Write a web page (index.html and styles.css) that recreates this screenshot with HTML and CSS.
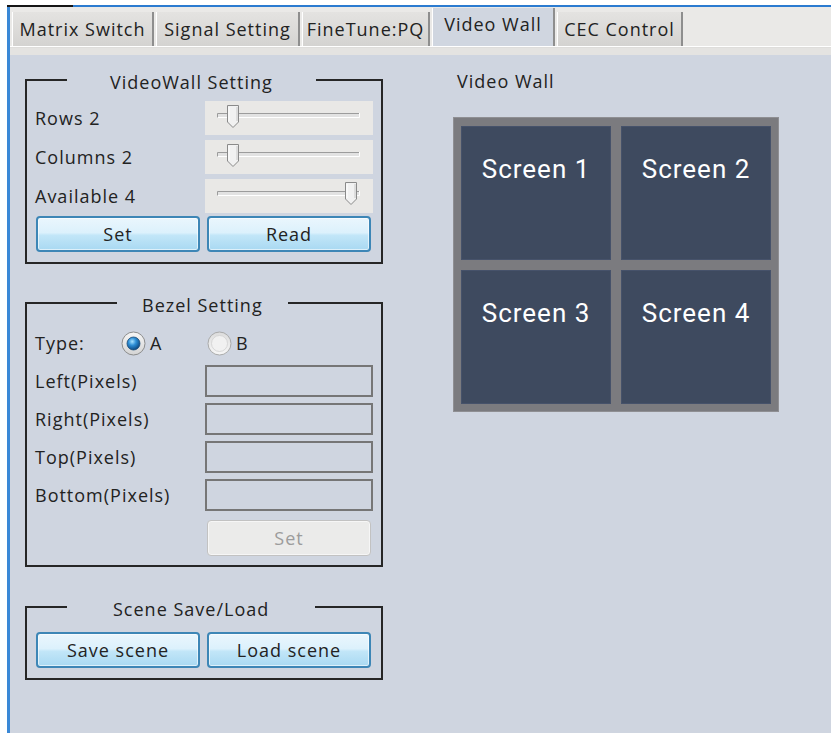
FILE: index.html
```html
<!DOCTYPE html>
<html>
<head>
<meta charset="utf-8">
<title>Video Wall</title>
<link rel="stylesheet" href="styles.css">
</head>
<body>
<div class="topline"><div class="topline-dark"></div><div class="topline-blue"></div></div>
<div class="frame">
  <div class="tabstrip">
    <div class="tab t1">Matrix Switch</div>
    <div class="tab t2">Signal Setting</div>
    <div class="tab t3">FineTune:PQ</div>
    <div class="tab t4 active">Video Wall</div>
    <div class="tab t5">CEC Control</div>
  </div>
  <div class="band"></div>
  <div class="content">
    <div class="leftcol">
      <div class="group g1">
        <div class="ghead"><span class="gl gl-left"></span><span class="gt">VideoWall Setting</span><span class="gl gl-right"></span></div>
        <div class="gbody">
          <div class="srow"><span class="lbl">Rows 2</span>
            <div class="slider"><svg width="168" height="34" viewBox="0 0 168 34"><rect x="12" y="12" width="142" height="5" fill="#e2e2e2"/><path d="M12.5 17V12.5H154" stroke="#9c9c9c" fill="none"/><path d="M12.5 16.5H154.5V12" stroke="#ffffff" fill="none"/><path d="M22.5 4.5h11v16.5l-5.5 5.5l-5.5-5.5z" fill="#f1f1f1" stroke="#8a8a8a"/><path d="M24 6v14" stroke="#ffffff"/><path d="M32 6v14" stroke="#c8c8c8"/></svg></div>
          </div>
          <div class="srow"><span class="lbl">Columns 2</span>
            <div class="slider"><svg width="168" height="34" viewBox="0 0 168 34"><rect x="12" y="12" width="142" height="5" fill="#e2e2e2"/><path d="M12.5 17V12.5H154" stroke="#9c9c9c" fill="none"/><path d="M12.5 16.5H154.5V12" stroke="#ffffff" fill="none"/><path d="M22.5 4.5h11v16.5l-5.5 5.5l-5.5-5.5z" fill="#f1f1f1" stroke="#8a8a8a"/><path d="M24 6v14" stroke="#ffffff"/><path d="M32 6v14" stroke="#c8c8c8"/></svg></div>
          </div>
          <div class="srow"><span class="lbl">Available 4</span>
            <div class="slider"><svg width="168" height="34" viewBox="0 0 168 34"><rect x="12" y="12" width="142" height="5" fill="#e2e2e2"/><path d="M12.5 17V12.5H154" stroke="#9c9c9c" fill="none"/><path d="M12.5 16.5H154.5V12" stroke="#ffffff" fill="none"/><path d="M140.5 3.5h11v16.5l-5.5 5.5l-5.5-5.5z" fill="#f1f1f1" stroke="#8a8a8a"/><path d="M142 5v14" stroke="#ffffff"/><path d="M150 5v14" stroke="#c8c8c8"/></svg></div>
          </div>
          <div class="btnrow"><button class="btn">Set</button><button class="btn">Read</button></div>
        </div>
      </div>

      <div class="group g2">
        <div class="ghead"><span class="gl gl-left"></span><span class="gt">Bezel Setting</span><span class="gl gl-right"></span></div>
        <div class="gbody">
          <div class="trow">
            <span class="tlbl">Type:</span>
            <span class="radio"><svg width="25" height="25" viewBox="0 0 25 25"><defs><linearGradient id="rrA" x1="0" y1="0" x2="0" y2="1"><stop offset="0" stop-color="#f6f6f6"/><stop offset="1" stop-color="#d4d4d4"/></linearGradient><radialGradient id="rbA" cx="40%" cy="35%" r="65%"><stop offset="0" stop-color="#a8e2ff"/><stop offset="0.45" stop-color="#2e8fd6"/><stop offset="1" stop-color="#0c4a84"/></radialGradient></defs><circle cx="12.5" cy="12.5" r="11.5" fill="url(#rrA)" stroke="#8b8c8c"/><circle cx="12.5" cy="12.5" r="6.5" fill="url(#rbA)" stroke="#1c4c78" stroke-width="0.8"/></svg><span>A</span></span>
            <span class="radio"><svg width="25" height="25" viewBox="0 0 25 25"><defs><linearGradient id="rrB" x1="0" y1="0" x2="0" y2="1"><stop offset="0" stop-color="#dcdcdc"/><stop offset="1" stop-color="#f7f7f7"/></linearGradient></defs><circle cx="12.5" cy="12.5" r="11.5" fill="url(#rrB)" stroke="#a9aaaa"/><circle cx="12.5" cy="12.5" r="8" fill="#f1f1f1" stroke="#d0d0d0" stroke-width="0.8"/></svg><span>B</span></span>
          </div>
          <div class="frow"><span class="lbl">Left(Pixels)</span><div class="tbox"></div></div>
          <div class="frow"><span class="lbl">Right(Pixels)</span><div class="tbox"></div></div>
          <div class="frow"><span class="lbl">Top(Pixels)</span><div class="tbox"></div></div>
          <div class="frow"><span class="lbl">Bottom(Pixels)</span><div class="tbox"></div></div>
          <div class="setrow"><button class="btn btn-disabled" disabled>Set</button></div>
        </div>
      </div>

      <div class="group g3">
        <div class="ghead"><span class="gl gl-left"></span><span class="gt">Scene Save/Load</span><span class="gl gl-right"></span></div>
        <div class="gbody">
          <div class="btnrow"><button class="btn">Save scene</button><button class="btn">Load scene</button></div>
        </div>
      </div>
    </div>

    <div class="rightcol">
      <div class="walltitle">Video Wall</div>
      <div class="wall">
        <div class="screen">Screen 1</div>
        <div class="screen">Screen 2</div>
        <div class="screen">Screen 3</div>
        <div class="screen">Screen 4</div>
      </div>
    </div>
  </div>
</div>
</body>
</html>
```

FILE: styles.css
```css
* { box-sizing: border-box; }

html, body {
  margin: 0;
  padding: 0;
  background: #ffffff;
}

body {
  font-family: "Open Sans", "Noto Sans", sans-serif;
  font-size: 18px;
  letter-spacing: 1px;
  color: #222222;
}

.topline {
  display: flex;
  margin: 5px 0 0 7px;
  width: 824px;
  height: 2px;
}

.topline-dark { width: 66px; background: #151515; }
.topline-blue { flex: 1; background: #2b7bd0; }

.frame {
  margin-left: 7px;
  width: 824px;
  height: 726px;
  border-left: 3px solid #3a88d6;
  display: flex;
  flex-direction: column;
}

.tabstrip {
  height: 40px;
  flex: none;
  background: #eae9e7;
  border-bottom: 1px solid #ffffff;
  display: flex;
  align-items: flex-end;
  gap: 2px;
  padding-left: 2px;
}

.tab {
  height: 34px;
  display: flex;
  align-items: center;
  justify-content: center;
  border-left: 1px solid #ffffff;
  border-right: 2px solid #8e8e8e;
  background: linear-gradient(#e4e3e1, #d4d3d1);
  white-space: nowrap;
}

.t1 { width: 142px; }
.t2 { width: 144px; }
.t3 { width: 128px; }
.t4 { width: 123px; }
.t5 { width: 126px; }

.tab.active {
  height: 38px;
  background: #d0d6e0;
  padding-bottom: 6px;
}

.band {
  height: 8px;
  flex: none;
  background: #e4e3e1;
  border-top: 1px solid #dedddb;
}

.content {
  flex: 1;
  background: #cfd5e0;
  display: flex;
  padding-left: 15px;
  gap: 70px;
}

.leftcol {
  width: 358px;
  padding-top: 24px;
}

.group {
  display: flex;
  flex-direction: column;
  border: 2px solid #262626;
  border-top: 0;
}

.ghead {
  display: flex;
  height: 24px;
  line-height: 24px;
  margin: -9px -2px 0;
}

.gl {
  border-top: 2px solid #262626;
  margin-top: 9px;
}

.gl-right { flex: 1; }
.gt { white-space: nowrap; }

.g1 .gl-left { width: 42px; }
.g1 .gt { padding: 0 43px; }

.g2 { margin-top: 38px; }
.g2 .gl-left { width: 92px; }
.g2 .gt { padding: 0 25px; }

.g3 { margin-top: 39px; }
.g3 .gl-left { width: 42px; }
.g3 .gt { padding: 0 46px; }

.g1 .gbody { padding: 7px 8px 10px; }
.g2 .gbody { padding: 14px 8px 9px; }
.g3 .gbody { padding: 11px 8px 10px; }

.srow {
  display: flex;
  align-items: center;
  height: 34px;
  margin-bottom: 5px;
}

.lbl { width: 170px; white-space: nowrap; }

.slider {
  width: 168px;
  height: 34px;
  background: #e9e8e6;
}

.slider svg { display: block; }

.btnrow {
  display: flex;
  gap: 7px;
  padding-left: 1px;
}

.g1 .btnrow { margin-top: -2px; }

.btn {
  width: 164px;
  height: 36px;
  padding: 0;
  font: inherit;
  letter-spacing: inherit;
  color: #222222;
  border: 2px solid #3d86b6;
  border-radius: 4px;
  background: linear-gradient(#eaf6fd 0%, #dcf1fc 46%, #c2e6f8 54%, #a9d9f2 100%);
  box-shadow: inset 0 0 0 1px rgba(255, 255, 255, 0.6);
}

.btn-disabled {
  color: #9c9c9c;
  border: 1px solid #c2c2c2;
  background: #ebebea;
  box-shadow: inset 0 0 0 1px #f6f6f6;
}

.trow {
  display: flex;
  align-items: center;
  height: 24px;
  margin-bottom: 10px;
}

.tlbl { width: 86px; }

.radio {
  width: 86px;
  display: flex;
  align-items: center;
  gap: 4px;
}

.radio svg { display: block; flex: none; }

.frow {
  display: flex;
  align-items: center;
  height: 32px;
  margin-bottom: 6px;
}

.tbox {
  width: 168px;
  height: 32px;
  border: 2px solid #767676;
}

.setrow {
  display: flex;
  margin-top: 9px;
  padding-left: 172px;
}

.rightcol {
  padding-top: 14px;
}

.walltitle {
  margin-left: 4px;
  line-height: 24px;
  margin-bottom: 24px;
}

.wall {
  display: grid;
  grid-template-columns: 150px 150px;
  grid-template-rows: 134px 134px;
  gap: 10px;
  padding: 8px 7px 7px;
  width: 326px;
  background: #7b7b7f;
  border: 1px solid #8f8f93;
}

.screen {
  background: #3e4a5f;
  border: 1px solid #46526a;
  color: #ffffff;
  font-family: Roboto, "Noto Sans", sans-serif;
  font-size: 26px;
  letter-spacing: 1px;
  line-height: 30px;
  text-align: center;
  padding-top: 27px;
}
```
